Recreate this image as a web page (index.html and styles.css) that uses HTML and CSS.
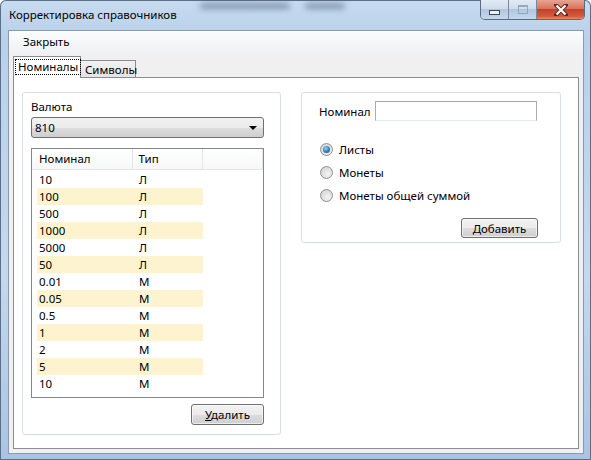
FILE: index.html
```html
<!DOCTYPE html>
<html lang="ru">
<head>
    <meta charset="UTF-8">
    <title>Корректировка справочников</title>
    <link rel="stylesheet" href="styles.css">
</head>
<body>
    <div class="window">
        <div class="titlebar">
            <span class="glass-blur blur-1"></span>
            <span class="glass-blur blur-2"></span>
            <div class="title">Корректировка справочников</div>
            <div class="controls">
                <div class="ctl ctl-min"><span class="glyph-min"></span></div>
                <div class="ctl ctl-max"><span class="glyph-max"></span></div>
                <div class="ctl ctl-close">
                    <svg width="14" height="12" viewBox="0 0 14 12">
                        <path d="M2 1 L12 11 M12 1 L2 11" stroke="#5a2a22" stroke-width="4" stroke-linecap="square"/>
                        <path d="M2.5 1.5 L11.5 10.5 M11.5 1.5 L2.5 10.5" stroke="#ffffff" stroke-width="2.2"/>
                    </svg>
                </div>
            </div>
        </div>

        <div class="client">
            <div class="menubar">
                <span class="menu-item">Закрыть</span>
            </div>

            <div class="tabctl">
                <div class="tabstrip">
                    <div class="tab active"><span class="focus">Номиналы</span></div>
                    <div class="tab">Символы</div>
                </div>

                <div class="tabpage">
                    <div class="group group-left">
                        <div class="field-label">Валюта</div>
                        <div class="combo">
                            <span>810</span>
                            <span class="combo-arrow"></span>
                        </div>

                        <div class="listview">
                            <div class="lv-header">
                                <div class="lv-col col-nom">Номинал</div>
                                <div class="lv-col col-type">Тип</div>
                                <div class="lv-col col-fill"></div>
                            </div>
                            <div class="lv-rows">
                                <div class="lv-row"><span class="col-nom">10</span><span class="col-type">Л</span></div>
                                <div class="lv-row alt"><span class="col-nom">100</span><span class="col-type">Л</span></div>
                                <div class="lv-row"><span class="col-nom">500</span><span class="col-type">Л</span></div>
                                <div class="lv-row alt"><span class="col-nom">1000</span><span class="col-type">Л</span></div>
                                <div class="lv-row"><span class="col-nom">5000</span><span class="col-type">Л</span></div>
                                <div class="lv-row alt"><span class="col-nom">50</span><span class="col-type">Л</span></div>
                                <div class="lv-row"><span class="col-nom">0.01</span><span class="col-type">М</span></div>
                                <div class="lv-row alt"><span class="col-nom">0.05</span><span class="col-type">М</span></div>
                                <div class="lv-row"><span class="col-nom">0.5</span><span class="col-type">М</span></div>
                                <div class="lv-row alt"><span class="col-nom">1</span><span class="col-type">М</span></div>
                                <div class="lv-row"><span class="col-nom">2</span><span class="col-type">М</span></div>
                                <div class="lv-row alt"><span class="col-nom">5</span><span class="col-type">М</span></div>
                                <div class="lv-row"><span class="col-nom">10</span><span class="col-type">М</span></div>
                            </div>
                        </div>

                        <div class="button-row">
                            <button class="btn btn-delete"><u>У</u>далить</button>
                        </div>
                    </div>

                    <div class="group group-right">
                        <div class="nominal-row">
                            <span class="nominal-label">Номинал</span>
                            <input class="textbox" type="text">
                        </div>

                        <div class="radios">
                            <div class="radio-row"><span class="radio checked"></span>Листы</div>
                            <div class="radio-row"><span class="radio"></span>Монеты</div>
                            <div class="radio-row"><span class="radio"></span>Монеты общей суммой</div>
                        </div>

                        <div class="button-row">
                            <button class="btn btn-add">Добавить</button>
                        </div>
                    </div>
                </div>
            </div>
        </div>
    </div>
</body>
</html>
```

FILE: styles.css
```css
body {
    margin: 0;
    padding: 0;
    font-family: "Noto Sans", "Open Sans", sans-serif;
    font-size: 11.5px;
    color: #000;
    background: #ffffff;
    overflow: hidden;
}

/* Aero window frame */
.window {
    width: 591px;
    height: 460px;
    display: flex;
    flex-direction: column;
    background: linear-gradient(to bottom, #c7dbf0 0%, #bad1ea 8%, #c4d8ee 60%, #a9c4e2 100%);
    border-radius: 6px 6px 0 0;
    box-shadow: inset 0 0 0 1px #5d6f86;
    overflow: hidden;
}

.titlebar {
    height: 30px;
    position: relative;
    display: flex;
    align-items: flex-start;
    flex-shrink: 0;
}

.glass-blur {
    position: absolute;
    border-radius: 6px;
    background: #4a5f78;
    filter: blur(3px);
    opacity: 0.55;
}

.blur-1 {
    left: 200px;
    top: 3px;
    width: 90px;
    height: 6px;
}

.blur-2 {
    left: 305px;
    top: 3px;
    width: 40px;
    height: 6px;
}

.title {
    position: relative;
    margin: 7px 0 0 9px;
    line-height: 16px;
    color: #000;
}

.controls {
    margin-left: auto;
    margin-right: 6px;
    display: flex;
    border: 1px solid #5b6a7d;
    border-top: none;
    border-radius: 0 0 5px 5px;
    overflow: hidden;
    position: relative;
}

.ctl {
    height: 19px;
    display: flex;
    align-items: center;
    justify-content: center;
}

.ctl-min, .ctl-max {
    width: 27px;
    background: linear-gradient(to bottom, #e2ebf5 0%, #cfdcec 45%, #b2c6de 50%, #c5d7ec 100%);
    border-right: 1px solid #7a8a9e;
}

.ctl-close {
    width: 47px;
    background: linear-gradient(to bottom, #e8a493 0%, #d9735f 45%, #c4412b 50%, #d25a3e 85%, #e38a67 100%);
}

.glyph-min {
    width: 9px;
    height: 3px;
    margin-top: 5px;
    background: #eef3f9;
    border: 1px solid #38475a;
}

.glyph-max {
    width: 8px;
    height: 6px;
    border: 1px solid #8a9bb0;
    border-top-width: 2px;
    background: transparent;
    opacity: 0.8;
}

/* Client area */
.client {
    flex: 1;
    margin: 0 7px 6px 8px;
    border: 1px solid #8a9bb1;
    background: #f0f0f0;
    display: flex;
    flex-direction: column;
    min-height: 0;
}

.menubar {
    height: 22px;
    line-height: 22px;
    padding-left: 14px;
    background: linear-gradient(to bottom, #fbfcfd, #eff1f4);
    flex-shrink: 0;
}

.tabctl {
    flex: 1;
    margin: 0 4px 4px 4px;
    display: flex;
    flex-direction: column;
    min-height: 0;
}

.tabstrip {
    height: 24px;
    display: flex;
    align-items: flex-end;
    flex-shrink: 0;
}

.tab {
    height: 16px;
    line-height: 17px;
    width: 50px;
    padding: 0 0 0 4px;
    border: 1px solid #898c95;
    border-bottom: none;
    border-left: none;
    background: linear-gradient(to bottom, #f2f2f2, #e3e3e3);
    white-space: nowrap;
}

.tab.active {
    width: 64px;
    height: 21px;
    line-height: 19px;
    padding: 0 0 0 2px;
    border-left: 1px solid #898c95;
    background: #ffffff;
    margin-bottom: -1px;
    position: relative;
    z-index: 1;
}

.focus {
    display: inline-block;
    padding: 0 2px;
    line-height: 14px;
    outline: 1px dotted #000;
    outline-offset: 0;
}

.tabpage {
    flex: 1;
    border: 1px solid #898c95;
    background: #ffffff;
    padding: 14px 0 0 8px;
    display: flex;
    align-items: flex-start;
    gap: 20px;
}

.group {
    border: 1px solid #d5dfe5;
    border-radius: 3px;
    box-sizing: border-box;
}

.group-left {
    width: 259px;
    height: 343px;
    padding: 6px 16px 0 8px;
}

.group-right {
    width: 260px;
    height: 151px;
    padding: 8px 22px 0 17px;
}

.field-label {
    line-height: 16px;
}

.combo {
    margin-top: 2px;
    height: 21px;
    box-sizing: border-box;
    border: 1px solid #707070;
    border-radius: 3px;
    background: linear-gradient(to bottom, #f2f2f2 0%, #ebebeb 50%, #dddddd 51%, #cfcfcf 100%);
    display: flex;
    align-items: center;
    padding: 0 6px 0 3px;
}

.combo-arrow {
    margin-left: auto;
    width: 0;
    height: 0;
    border-left: 4px solid transparent;
    border-right: 4px solid transparent;
    border-top: 4px solid #000;
}

/* List view */
.listview {
    margin-top: 10px;
    height: 250px;
    box-sizing: border-box;
    border: 1px solid #828790;
    background: #ffffff;
}

.lv-header {
    height: 21px;
    display: flex;
    background: linear-gradient(to bottom, #ffffff, #f6f7f9);
    border-bottom: 1px solid #e5e5e5;
    box-sizing: border-box;
}

.lv-col {
    line-height: 20px;
    border-right: 1px solid #e3e5e8;
    box-sizing: border-box;
}

.lv-header .col-nom {
    width: 101px;
    padding-left: 7px;
}

.lv-header .col-type {
    width: 71px;
    padding-left: 6px;
}

.col-fill {
    width: 60px;
}

.lv-rows {
    padding-top: 1px;
}

.lv-row {
    height: 17px;
    line-height: 17px;
    display: flex;
    margin-left: 5px;
    width: 166px;
}

.lv-row.alt {
    background: #fdf4cf;
}

.lv-row .col-nom {
    width: 99px;
    padding-left: 2px;
}

.lv-row .col-type {
    padding-left: 1px;
}

.button-row {
    display: flex;
    justify-content: flex-end;
}

.btn {
    font-family: inherit;
    font-size: 11.5px;
    height: 21px;
    padding: 0;
    border: 1px solid #707070;
    border-radius: 3px;
    background: linear-gradient(to bottom, #f2f2f2 0%, #ebebeb 50%, #dddddd 51%, #cfcfcf 100%);
    color: #000;
    box-shadow: inset 0 0 0 1px rgba(255, 255, 255, 0.6);
}

.btn-delete {
    width: 73px;
    margin-top: 6px;
}

.btn-add {
    width: 77px;
    height: 20px;
    margin-top: 11px;
}

/* Right group */
.nominal-row {
    display: flex;
    align-items: center;
}

.nominal-label {
    width: 56px;
}

.textbox {
    width: 162px;
    height: 20px;
    box-sizing: border-box;
    border: 1px solid #abadb3;
    border-top-color: #a3a6ad;
    border-bottom-color: #e3e9ef;
    padding: 0;
    margin: 0;
}

.radios {
    margin-top: 17px;
}

.radio-row {
    height: 23px;
    display: flex;
    align-items: center;
}

.radio {
    width: 11px;
    height: 11px;
    border-radius: 50%;
    border: 1px solid #8e8f8f;
    background: radial-gradient(circle at 60% 65%, #f4f4f4 0%, #d9d9d9 70%, #c4c4c4 100%);
    margin-right: 6px;
    margin-left: 1px;
    position: relative;
}

.radio.checked::after {
    content: "";
    position: absolute;
    left: 2px;
    top: 2px;
    width: 7px;
    height: 7px;
    border-radius: 50%;
    background: radial-gradient(circle at 40% 35%, #9ad6f5 0%, #2e85c2 50%, #12416d 100%);
}
```
